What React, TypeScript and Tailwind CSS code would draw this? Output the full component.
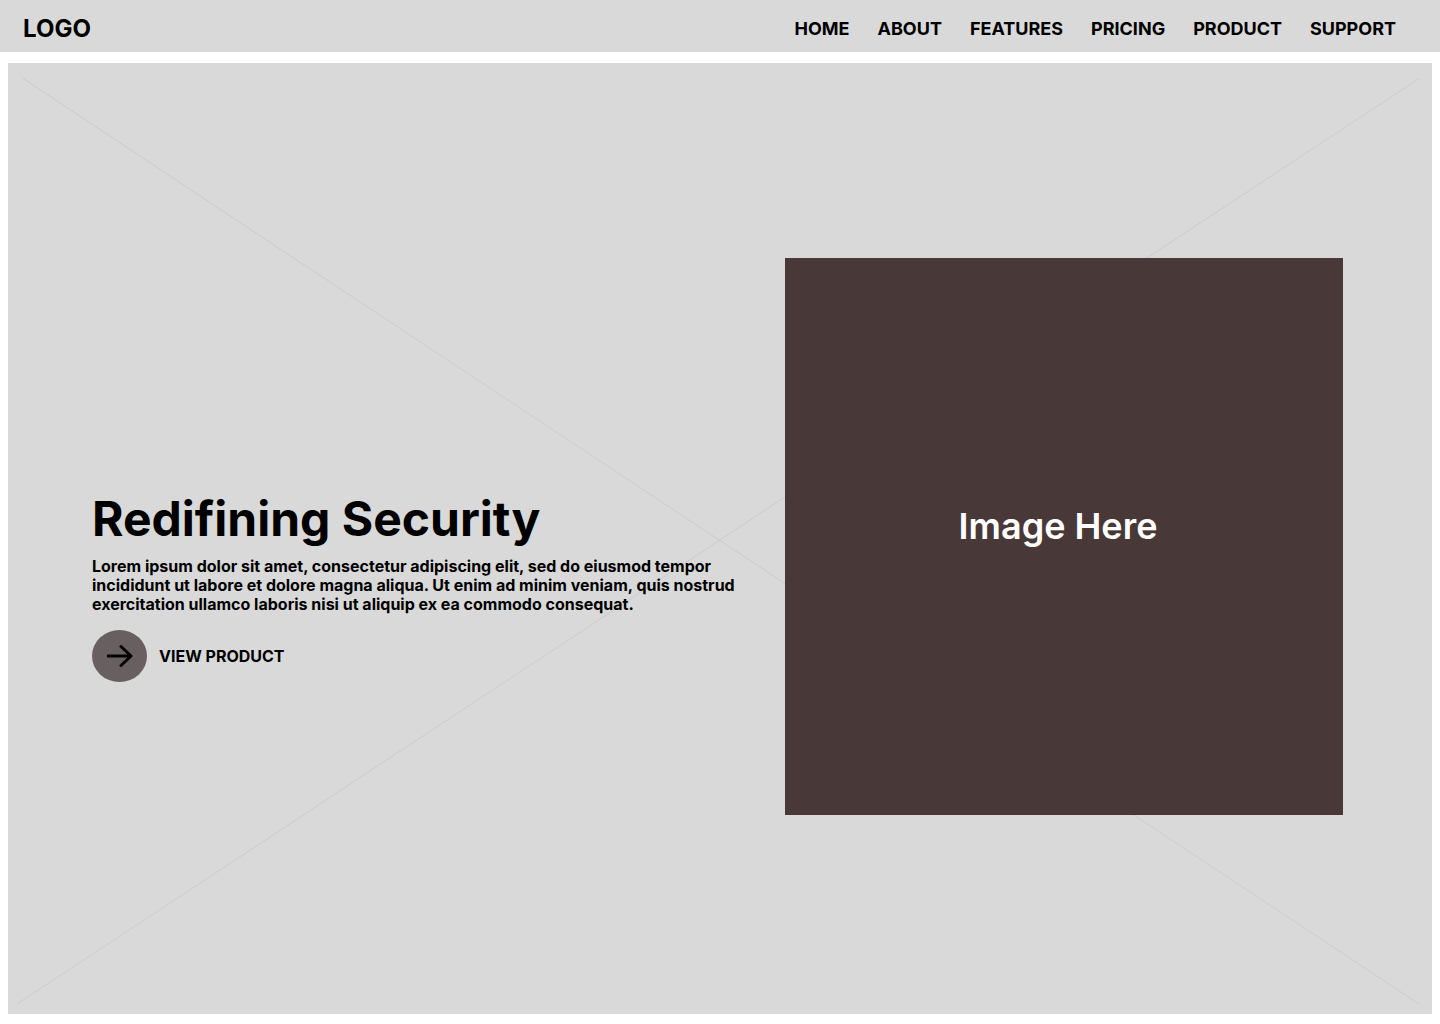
const links = ["HOME", "ABOUT", "FEATURES", "PRICING", "PRODUCT", "SUPPORT"];

function Header() {
  return (
    <header className="flex h-[52px] items-center justify-between bg-[#d9d9d9] pt-[6px] pr-11 pl-[23px]">
      <a href="#home" className="text-2xl font-bold">LOGO</a>
      <nav aria-label="Main">
        <ul className="flex gap-7 text-lg font-bold">
          {links.map((label) => (
            <li key={label}>
              <a href={"#" + label.toLowerCase()}>{label}</a>
            </li>
          ))}
        </ul>
      </nav>
    </header>
  );
}

function Backdrop() {
  return (
    <svg
      className="absolute inset-0 h-full w-full"
      viewBox="0 0 1424 951"
      preserveAspectRatio="none"
      stroke="#d0c9c9"
      fill="none"
      aria-hidden="true"
    >
      <path d="M15 15.5L1411 941M1411 15.5L9 941" />
    </svg>
  );
}

export default function App() {
  return (
    <div className="flex min-h-screen flex-col bg-white font-['Inter',sans-serif] text-black">
      <Header />
      <main className="relative mx-2 mt-[11px] mb-[10px] grid grow grid-cols-[1fr_558px] items-center gap-8 bg-[#d9d9d9] pr-[89px] pb-1 pl-[84px]">
        <Backdrop />
        <section className="relative pt-[104px]">
          <h1 className="text-5xl font-bold">Redifining Security</h1>
          <p className="mt-[14px] text-base leading-[19px] font-bold">
            Lorem ipsum dolor sit amet, consectetur adipiscing elit, sed do eiusmod tempor incididunt ut labore et dolore magna aliqua. Ut enim ad minim veniam, quis nostrud exercitation ullamco laboris nisi ut aliquip ex ea commodo consequat.
          </p>
          <button type="button" className="mt-4 flex items-center gap-3 text-base font-bold">
            <span className="flex h-[52px] w-[55px] items-center justify-center rounded-[50%] bg-[#686060]">
              <svg width="27" height="24" viewBox="0 0 27 24" fill="none" stroke="black" strokeWidth="3" aria-hidden="true">
                <path d="M1 12H25" />
                <path d="M15 2.5L25 12L15 21.5" strokeLinecap="round" strokeLinejoin="round" />
              </svg>
            </span>
            VIEW PRODUCT
          </button>
        </section>
        <div className="relative flex aspect-[558/557] items-center justify-center bg-[#483838] pr-3 pb-[22px] text-4xl font-semibold text-white">
          Image Here
        </div>
      </main>
    </div>
  );
}
